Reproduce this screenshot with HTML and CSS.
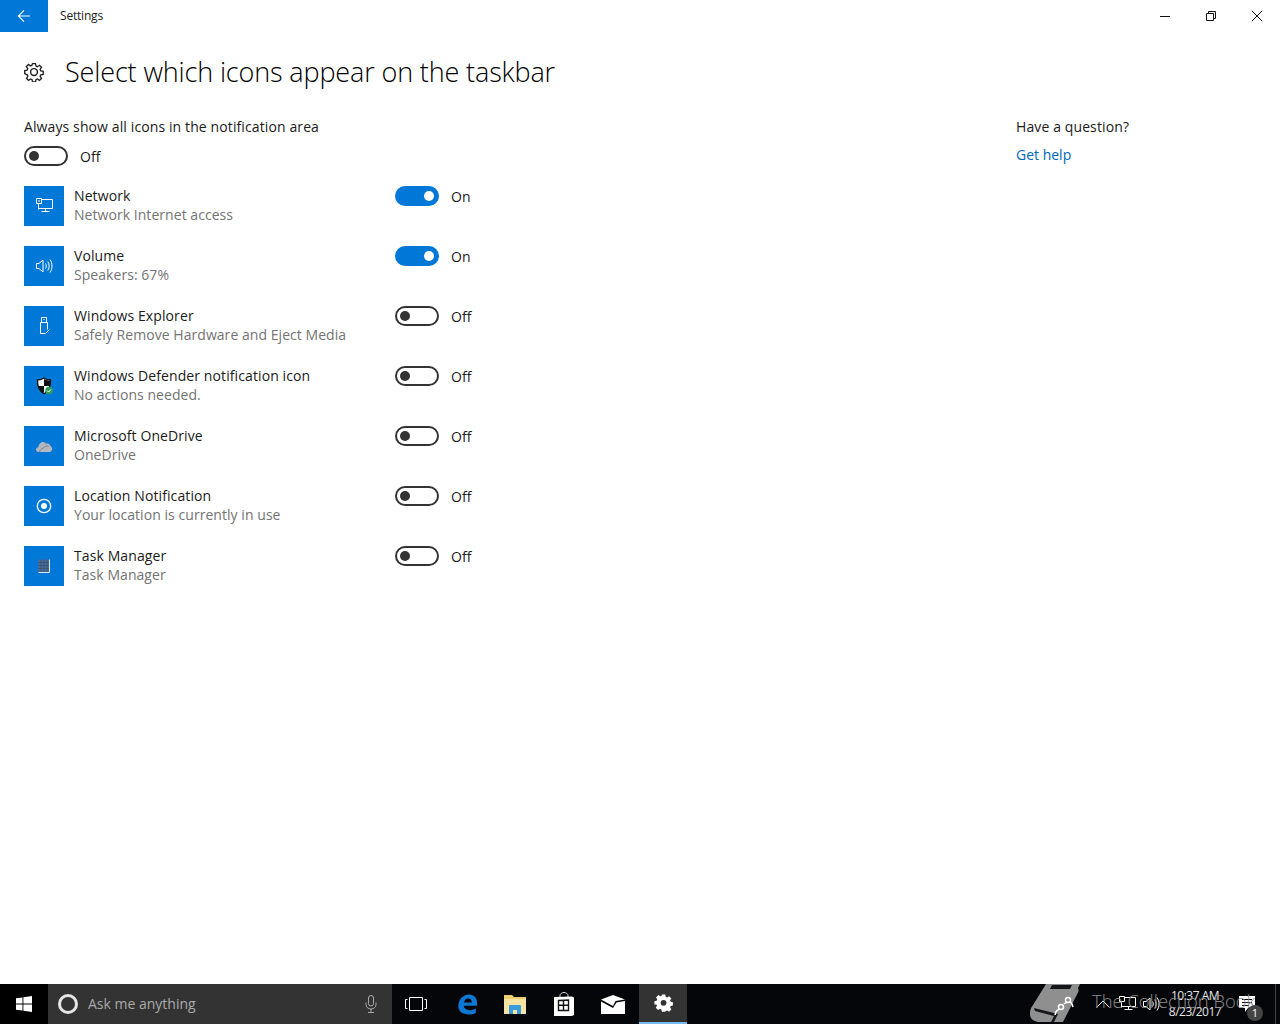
FILE: index.html
```html
<!DOCTYPE html>
<html lang="en">
<head>
<meta charset="utf-8">
<title>Settings</title>
<link rel="stylesheet" href="styles.css">
</head>
<body>
<div class="window">
  <header class="titlebar">
    <div class="back"><svg width="16" height="16" viewBox="0 0 16 16"><path d="M14 8H2.500M8 2.300 2.300 8 8 13.700" fill="none" stroke="#fff" stroke-width="1.100"/></svg></div>
    <div class="app-name">Settings</div>
    <div class="win-controls">
      <div class="win-btn"><svg width="12" height="12" viewBox="0 0 12 12"><path d="M1 6.500h10" stroke="#111" stroke-width="1"/></svg></div>
      <div class="win-btn"><svg width="12" height="12" viewBox="0 0 12 12"><path d="M1.500 3.500h7v7h-7zM3.500 3.500v-2h7v7h-2" fill="none" stroke="#111" stroke-width="1"/></svg></div>
      <div class="win-btn"><svg width="12" height="12" viewBox="0 0 12 12"><path d="M.8.8l10.400 10.400M11.200.8.8 11.200" stroke="#111" stroke-width="1"/></svg></div>
    </div>
  </header>

  <main class="content">
    <section class="left">
      <div class="page-head">
        <svg class="head-gear" width="20" height="20" viewBox="0 0 20 20"><g fill="none" stroke="#222" stroke-width="1.450"><circle cx="10" cy="10" r="3.400"/><path d="M8.400 1h3.200l.5 2.600 1.600.7 2.200-1.500 2.200 2.200-1.500 2.200.7 1.600 2.600.5v3.200l-2.600.5-.7 1.600 1.500 2.200-2.200 2.200-2.200-1.500-1.600.7-.5 2.600H8.400l-.5-2.600-1.600-.7-2.200 1.500-2.200-2.200 1.500-2.200-.7-1.600L0 11.600V8.400l2.600-.5.7-1.600L1.800 4.100 4 1.900l2.200 1.500 1.600-.7z" transform="translate(.7 .7) scale(.93)"/></g></svg>
        <h1 class="page-title">Select which icons appear on the taskbar</h1>
      </div>

      <div class="setting-label">Always show all icons in the notification area</div>
      <div class="toggle-wrap master">
        <span class="toggle"></span><span class="toggle-text">Off</span>
      </div>

      <ul class="icon-list">
        <li class="icon-row">
          <div class="tile"><svg width="20" height="20" viewBox="0 0 20 20"><g fill="none" stroke="#fff" stroke-width="1"><path d="M4.500 3.500h14v9h-14zM11.500 12.500v3M7.500 15.500h8"/><path d="M2.500 2.500h5v5h-5z" fill="#0078d7"/><path d="M4 5h2"/><path d="M4.500 7.500v6"/></g></svg></div>
          <div class="row-text"><div class="row-name">Network</div><div class="row-sub">Network Internet access</div></div>
          <div class="toggle-wrap"><span class="toggle on"></span><span class="toggle-text">On</span></div>
        </li>
        <li class="icon-row">
          <div class="tile"><svg width="20" height="20" viewBox="0 0 20 20"><g fill="none" stroke="#fff" stroke-width="1"><path d="M2.500 7.500h2.500l4-3.500v12l-4-3.500H2.500z"/><path d="M11.500 7.500c1 1.600 1 3.400 0 5M13.800 5.500c1.800 2.900 1.800 6.100 0 9M16 3.500c2.700 4 2.700 9 0 13"/></g></svg></div>
          <div class="row-text"><div class="row-name">Volume</div><div class="row-sub">Speakers: 67%</div></div>
          <div class="toggle-wrap"><span class="toggle on"></span><span class="toggle-text">On</span></div>
        </li>
        <li class="icon-row">
          <div class="tile"><svg width="20" height="20" viewBox="0 0 20 20"><g fill="none" stroke="#fff" stroke-width="1"><path d="M7.500 1.500h5v5h-5zM6.500 6.500h7v7M6.500 6.500v11h5"/><path d="M9 3.500h.5M10.500 3.500h.5"/><path d="M11.500 17.500l4-4" stroke="#cfe3f4"/></g></svg></div>
          <div class="row-text"><div class="row-name">Windows Explorer</div><div class="row-sub">Safely Remove Hardware and Eject Media</div></div>
          <div class="toggle-wrap"><span class="toggle"></span><span class="toggle-text">Off</span></div>
        </li>
        <li class="icon-row">
          <div class="tile"><svg width="20" height="20" viewBox="0 0 20 20"><path d="M10 2c2 1.500 4.200 2 6.500 2 .3 6.500-1 10.500-6.500 13.800C4.500 14.500 3.200 10.500 3.500 4 5.800 4 8 3.500 10 2z" fill="#fff" stroke="#111" stroke-width="1.300"/><path d="M10 3v7H4.500c.3 3 1.800 5.300 5.500 7v-7h6c.3-1.700.4-3.400.4-5.500C14 4.500 12 4.100 10 3z" fill="#111"/><circle cx="15" cy="14.500" r="3.800" fill="#2f9e58"/><path d="M13 14.500l1.500 1.500 2.500-2.500" fill="none" stroke="#fff" stroke-width="1"/></svg></div>
          <div class="row-text"><div class="row-name">Windows Defender notification icon</div><div class="row-sub">No actions needed.</div></div>
          <div class="toggle-wrap"><span class="toggle"></span><span class="toggle-text">Off</span></div>
        </li>
        <li class="icon-row">
          <div class="tile"><svg width="20" height="20" viewBox="0 0 20 20"><path d="M4.500 16C2.800 16 2 14.800 2 13.600c0-1.300 1-2.300 2.300-2.400.5-2.400 2-5.200 4.600-5.200 1.500 0 2.500.7 3.200 1.800 2-.6 3.600.4 4 2 1.300.2 2 2 2 3.100 0 1.300-.9 3.100-2.500 3.100z" fill="#b3b8be"/><path d="M5.500 16c.5-2 1.800-3.700 4-4 1-2 3.500-2.500 5-1.500" fill="none" stroke="#7f868e" stroke-width="1"/></svg></div>
          <div class="row-text"><div class="row-name">Microsoft OneDrive</div><div class="row-sub">OneDrive</div></div>
          <div class="toggle-wrap"><span class="toggle"></span><span class="toggle-text">Off</span></div>
        </li>
        <li class="icon-row">
          <div class="tile"><svg width="20" height="20" viewBox="0 0 20 20"><circle cx="10" cy="10" r="6.700" fill="none" stroke="#fff" stroke-width="1.300"/><circle cx="10" cy="10" r="3" fill="#fff"/></svg></div>
          <div class="row-text"><div class="row-name">Location Notification</div><div class="row-sub">Your location is currently in use</div></div>
          <div class="toggle-wrap"><span class="toggle"></span><span class="toggle-text">Off</span></div>
        </li>
        <li class="icon-row">
          <div class="tile"><svg width="20" height="20" viewBox="0 0 20 20"><rect x="4" y="3.500" width="12" height="13" fill="#4a6a94"/><path d="M15.500 3.500v13h-11" fill="none" stroke="#dbe8f3" stroke-width="1"/><path d="M4 6.500h11M4 9.500h11M4 12.500h11M7 4v12M10 4v12M13 4v12" stroke="#35507a" stroke-width=".7"/></svg></div>
          <div class="row-text"><div class="row-name">Task Manager</div><div class="row-sub">Task Manager</div></div>
          <div class="toggle-wrap"><span class="toggle"></span><span class="toggle-text">Off</span></div>
        </li>
      </ul>
    </section>

    <aside class="help">
      <div class="setting-label">Have a question?</div>
      <a class="help-link" href="#">Get help</a>
    </aside>
  </main>

  <footer class="taskbar">
    <div class="start"><svg width="16" height="16" viewBox="0 0 16 16"><path d="M0 2.300 6.500 1.400v6.200H0zM7.400 1.300 16 0v7.600H7.400zM0 8.400h6.500v6.200L0 13.700zM7.400 8.400H16V16l-8.600-1.300z" fill="#fff"/></svg></div>
    <div class="search">
      <span class="cortana"></span>
      <span class="search-text">Ask me anything</span>
      <svg class="mic" width="16" height="20" viewBox="0 0 16 20"><g fill="none" stroke="#aaa" stroke-width="1"><rect x="5.500" y="1.500" width="5" height="10.500" rx="2.500"/><path d="M3 8.500v2c0 2.500 2 4.500 5 4.500s5-2 5-4.500v-2M8 15v3M5 18.500h6"/></g></svg>
    </div>
    <div class="task-btn task-view"><svg width="22" height="14" viewBox="0 0 22 14"><g fill="none" stroke="#fff" stroke-width="1"><path d="M4.500.5h13v13h-13z"/><path d="M2.500 2.500H.5v9h2M19.500 2.500h2v9h-2"/></g></svg></div>
    <div class="task-btn narrow"><svg width="21" height="22" viewBox="0 0 24 24"><path d="M1.500 13.500C2 6 7.500 1 14 1c5.500 0 9 4 9 10v3H7.800c.3 3.400 3 5 6.200 5 2.500 0 5-.6 7.500-2v5.300c-2.500 1.200-5 1.700-7.800 1.700C6.500 24 1 20.500 1.500 13.500zM8 10.300h9c0-2.800-1.700-4.600-4.300-4.600C10.300 5.700 8.500 7.500 8 10.300z" fill="#0b78d4"/></svg></div>
    <div class="task-btn narrow"><svg width="22" height="20" viewBox="0 0 22 20"><path d="M0 1h8l2 2h12v17H0z" fill="#eccf6f"/><path d="M0 5h22v15H0z" fill="#f7e4a3"/><path d="M5 20v-8a1 1 0 0 1 1-1h10a1 1 0 0 1 1 1v8h-4v-4H9v4z" fill="#3a9bdc"/></svg></div>
    <div class="task-btn"><svg width="20" height="24" viewBox="0 0 20 24"><path d="M6 6V3.500C6 1.800 8 .5 10 .5s4 1.300 4 3V6" fill="none" stroke="#ddd" stroke-width="1"/><path d="M0 5l18-.5 2 1V23l-2 1H0z" fill="#fff"/><path d="M4.500 8.500l10-.5v10.500H4.500zM9.500 8v10.500M4.500 13.200h10" fill="none" stroke="#111" stroke-width="1.400"/></svg></div>
    <div class="task-btn"><svg width="24" height="19" viewBox="0 0 24 19"><path d="M0 4.500 12 0l12 4.500-9.500 1.500L12 11z" fill="#fff"/><path d="M0 6.500 12 13l3.500-5.500L24 6v13H0z" fill="#fff"/></svg></div>
    <div class="task-btn active"><svg width="19" height="19" viewBox="0 0 22 22"><path fill-rule="evenodd" fill="#fff" d="M9 1h4l.6 2.700 1.700.7 2.300-1.500 2.800 2.800-1.500 2.300.7 1.700 2.700.6v4l-2.700.6-.7 1.700 1.500 2.300-2.800 2.800-2.300-1.500-1.700.7L13 21.600H9l-.6-2.700-1.700-.7-2.300 1.500-2.800-2.800 1.500-2.300-.7-1.700L0 13V9l2.700-.6.700-1.700-1.500-2.300 2.800-2.800 2.300 1.500 1.700-.7zM11 7.500a3.500 3.500 0 1 0 0 7 3.500 3.500 0 0 0 0-7z" transform="translate(.5 -.3) scale(.96)"/></svg></div>

    <div class="tray">
      <svg class="tray-chevron" width="14" height="8" viewBox="0 0 14 8"><path d="M.5 7.500 7 1l6.500 6.500" fill="none" stroke="#fff" stroke-width="1"/></svg>
      <svg class="tray-net" width="20" height="20" viewBox="0 0 20 20"><g fill="none" stroke="#fff" stroke-width="1"><path d="M4.500 3.500h14v9h-14zM11.500 12.500v3M7.500 15.500h8"/><path d="M2.500 2.500h5v5h-5z" fill="#000"/><path d="M4.500 7.500v6"/></g></svg>
      <svg class="tray-vol" width="20" height="20" viewBox="0 0 20 20"><g fill="none" stroke="#fff" stroke-width="1"><path d="M2.500 7.500h2.500l4-3.500v12l-4-3.500H2.500z"/><path d="M11.500 7.500c1 1.600 1 3.400 0 5M13.800 5.500c1.800 2.900 1.800 6.100 0 9M16 3.500c2.700 4 2.700 9 0 13"/></g></svg>
      <div class="clock"><div>10:37 AM</div><div>8/23/2017</div></div>
      <div class="notify">
        <svg width="16" height="16" viewBox="0 0 16 16"><path fill-rule="evenodd" d="M0 0h16v12H9l-3 4v-4H0zM3 3v1h10V3zM3 6v1h10V6zM3 9v1h7V9z" fill="#fff"/></svg>
      </div>
      <span class="show-desktop"></span>
    </div>

    <div class="watermark">
      <svg class="wm-book" width="54" height="40" viewBox="0 0 54 40">
        <path d="M18 0h34l-2 4c1 2 .5 3.500 0 4.500L35 38H12C5 38 1.500 34 2 29c0-3 1-5.500 3-8z" fill="#8f8f8f"/>
        <path d="M24 1h20l-2 4H22zM6 24l24 6-4 8h-3l3-6L7 27z" fill="#16171b"/>
        <g fill="none" stroke="#fff" stroke-width="1.500"><circle cx="33" cy="23" r="2.500"/><path d="M27 31c.5-3 2-5 4-5.500"/><circle cx="40" cy="16" r="2.500"/><path d="M36 20c1-1 2-1.500 3-1.500M42.500 18c1 1 2 3 2.500 5"/></g>
      </svg>
      <span class="wm-text">The Collection Book</span>
    </div>
    <span class="badge">1</span>
  </footer>
</div>
</body>
</html>
```
FILE: styles.css
```css
* { box-sizing: border-box; }
html, body { margin: 0; padding: 0; }
body {
  font-family: "Open Sans", "Noto Sans", "Liberation Sans", sans-serif;
  color: #1a1a1a;
  background: #fff;
}
.window { width: 1280px; height: 1024px; display: flex; flex-direction: column; overflow: hidden; }

.titlebar { height: 32px; display: flex; align-items: center; flex: none; }
.back { width: 48px; height: 32px; background: #0078d7; display: flex; align-items: center; justify-content: center; }
.app-name { margin: 0 0 2px 12px; font-size: 12px; letter-spacing: -.2px; color: #222; }
.win-controls { margin-left: auto; display: flex; }
.win-btn { width: 46px; height: 32px; display: flex; align-items: center; justify-content: center; }

.content { flex: 1; display: flex; padding-left: 24px; }
.left { width: 992px; }
.page-head { display: flex; align-items: center; height: 40px; margin-top: 20px; }
.head-gear { flex: none; }
.page-title { margin: 0 0 0 21px; font-size: 27px; font-weight: 300; line-height: 40px; letter-spacing: -.14px; color: #000; white-space: nowrap; }

.setting-label { font-size: 14px; line-height: 20px; letter-spacing: .11px; color: #1a1a1a; }
.left > .setting-label { margin-top: 25px; }

.toggle-wrap { display: flex; align-items: center; height: 20px; }
.master { margin-top: 9px; }
.toggle { width: 44px; height: 20px; border: 2px solid #333; border-radius: 10px; position: relative; display: block; flex: none; }
.toggle::after { content: ""; position: absolute; left: 3px; top: 3px; width: 10px; height: 10px; border-radius: 50%; background: #333; }
.toggle.on { background: #0078d7; border-color: #0078d7; }
.toggle.on::after { left: auto; right: 3px; background: #fff; }
.toggle-text { margin-left: 12px; padding-top: 1px; font-size: 14px; line-height: 20px; color: #1a1a1a; }

.icon-list { list-style: none; margin: 20px 0 0; padding: 0; display: flex; flex-direction: column; gap: 20px; }
.icon-row { display: flex; align-items: flex-start; height: 40px; }
.tile { width: 40px; height: 40px; background: #0078d7; flex: none; display: flex; align-items: center; justify-content: center; }
.row-text { width: 321px; margin-left: 10px; flex: none; }
.row-name { font-size: 14px; line-height: 20px; letter-spacing: .1px; color: #1a1a1a; }
.row-sub { font-size: 14px; line-height: 18px; letter-spacing: .05px; color: #737373; }

.help { padding-top: 85px; }
.help-link { display: block; margin-top: 8px; font-size: 14px; line-height: 20px; letter-spacing: 0; color: #0067b8; text-decoration: none; }

.taskbar { height: 40px; flex: none; background: #05060a; display: flex; position: relative; align-items: stretch; }
.start { width: 48px; display: flex; align-items: center; justify-content: center; background: #000; }
.search { width: 344px; background: #333; display: flex; align-items: center; padding-left: 10px; }
.cortana { width: 20px; height: 20px; border: 3px solid #e6e6e6; border-radius: 50%; flex: none; }
.search-text { margin: 0 0 2px 10px; font-size: 14px; letter-spacing: 0; color: #aaa; }
.mic { margin-left: auto; margin-right: 13px; }
.task-btn { width: 49px; display: flex; align-items: center; justify-content: center; }
.task-btn.task-view { width: 51px; padding-right: 3px; }
.task-btn.narrow { width: 48px; }
.task-btn.active { background: #333; border-bottom: 2px solid #76b9ed; width: 48px; margin-left: 2px; }

.tray { margin-left: auto; display: flex; align-items: center; color: #fff; }
.tray-chevron { margin-right: 7px; }
.tray-net { margin-right: 4px; }
.tray-vol { margin-right: 2px; }
.clock { width: 64px; text-align: center; font-size: 12px; line-height: 16px; letter-spacing: -.5px; color: #e6e6e6; white-space: nowrap; }
.notify { width: 40px; display: flex; justify-content: center; }
.show-desktop { width: 1px; height: 40px; background: #444; margin-right: 4px; margin-left: 8px; }

.watermark { position: absolute; left: 1028px; top: 0; height: 40px; display: flex; align-items: center; pointer-events: none; }
.wm-book { flex: none; }
.wm-text { margin: 0 0 8px 10px; font-size: 18.4px; font-weight: 300; letter-spacing: 0; color: #8c8c8c; white-space: nowrap; }
.badge { position: absolute; left: 1247px; top: 21px; width: 16px; height: 16px; border-radius: 50%; background: #444; color: #fff; font-size: 11px; line-height: 16px; text-align: center; }
```
